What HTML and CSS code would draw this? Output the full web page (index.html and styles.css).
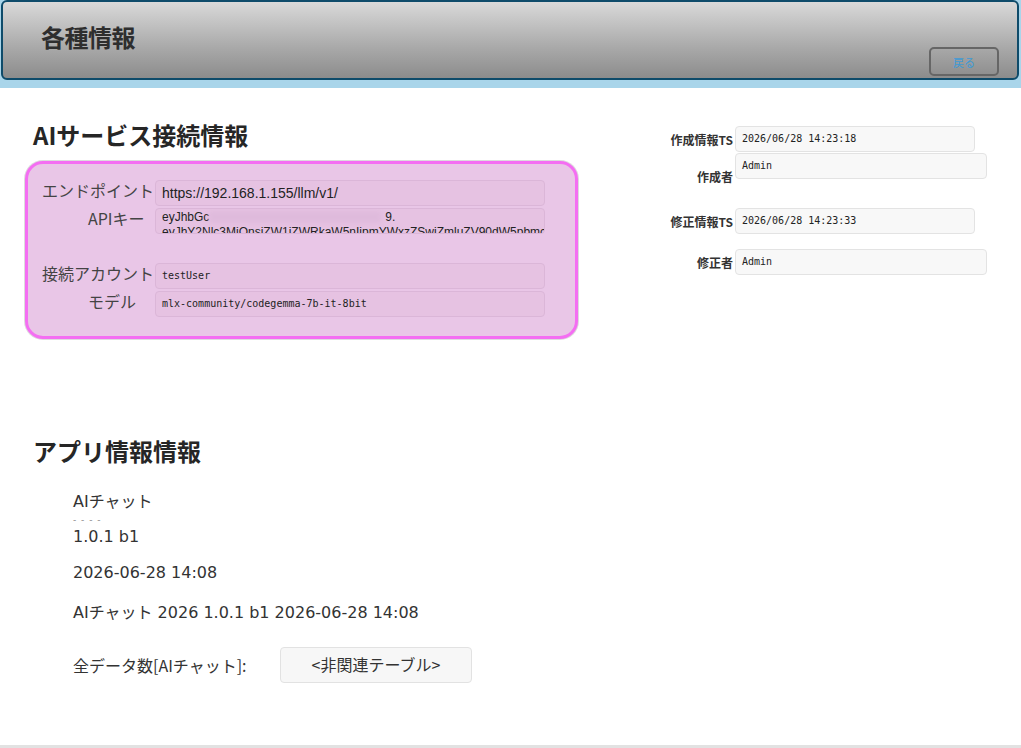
FILE: index.html
```html
<!DOCTYPE html>
<html lang="ja">
<head>
    <meta charset="UTF-8">
    <meta name="viewport" content="width=device-width, initial-scale=1.0">
    <title>各種情報</title>
    <link rel="stylesheet" href="styles.css">
</head>
<body>
    <!-- Header -->
    <header class="topbar">
        <div class="topbar-inner">
            <h1>各種情報</h1>
            <button type="button" class="back-btn">戻る</button>
        </div>
    </header>

    <main class="page">
        <div class="columns">
            <!-- AI service -->
            <section class="left-col">
                <h2 class="section-title">AIサービス接続情報</h2>
                <div class="pink-box">
                    <div class="form-grid">
                        <label class="field-label">エンドポイント</label>
                        <div class="field field-sans">https://192.168.1.155/llm/v1/</div>

                        <label class="field-label indent">APIキー</label>
                        <div class="field field-key">eyJhbGc<span class="blur"></span>9.<br>eyJhY2Nlc3MiOnsiZW1iZWRkaW5nIjpmYWxzZSwiZmluZV90dW5pbmciOmZhbHNl</div>

                        <div class="spacer"></div>

                        <label class="field-label">接続アカウント</label>
                        <div class="field field-mono">testUser</div>

                        <label class="field-label indent">モデル</label>
                        <div class="field field-mono">mlx-community/codegemma-7b-it-8bit</div>
                    </div>
                </div>
            </section>

            <!-- Record info -->
            <aside class="right-col">
                <div class="info-row">
                    <label>作成情報TS</label>
                    <div class="info-field">2026/06/28 14:23:18</div>
                </div>
                <div class="info-row bottom">
                    <label>作成者</label>
                    <div class="info-field wide top">Admin</div>
                </div>
                <div class="info-row gap-lg">
                    <label>修正情報TS</label>
                    <div class="info-field">2026/06/28 14:23:33</div>
                </div>
                <div class="info-row gap-md">
                    <label>修正者</label>
                    <div class="info-field wide">Admin</div>
                </div>
            </aside>
        </div>

        <!-- App info -->
        <section class="app-info">
            <h2 class="section-title">アプリ情報情報</h2>
            <div class="app-body">
                <p class="app-name">AIチャット</p>
                <p class="dashes">- - - -</p>
                <p class="version">1.0.1 b1</p>
                <p class="mt-16">2026-06-28 14:08</p>
                <p class="mt-20">AIチャット 2026 1.0.1 b1 2026-06-28 14:08</p>
                <div class="count-row">
                    <span class="count-label">全データ数[AIチャット]:</span>
                    <div class="count-box">&lt;非関連テーブル&gt;</div>
                </div>
            </div>
        </section>
    </main>

    <footer class="footer-line"></footer>
</body>
</html>
```

FILE: styles.css
```css
/* Reset */
* {
    margin: 0;
    padding: 0;
    box-sizing: border-box;
}

/* Body */
body {
    font-family: 'Noto Sans CJK JP', 'Liberation Sans', sans-serif;
    color: #333;
    background: #fff;
    height: 748px;
    overflow: hidden;
    display: flex;
    flex-direction: column;
}

/* Header */
.topbar {
    background: #a9d5ea;
    padding: 0 2px 8px 1px;
}

.topbar-inner {
    height: 80px;
    border: 2px solid #0e4b6a;
    border-radius: 6px;
    background: linear-gradient(to bottom, #d9d9d9, #a9a9a9 60%, #8c8c8c);
    display: flex;
    justify-content: space-between;
    align-items: flex-start;
    padding: 0 18px 0 38px;
}

.topbar-inner h1 {
    font-size: 24px;
    font-weight: bold;
    color: #2e2e2e;
    line-height: 30px;
    margin-top: 20px;
    letter-spacing: -0.5px;
}

.back-btn {
    margin-top: 45px;
    width: 70px;
    height: 29px;
    border: 2px solid #666;
    border-radius: 5px;
    background: transparent;
    color: #3d9ad6;
    font-family: 'Noto Sans CJK JP', sans-serif;
    font-size: 11px;
    cursor: pointer;
}

/* Page */
.page {
    flex: 1;
}

.columns {
    display: flex;
    padding-top: 32px;
}

.left-col {
    padding-left: 25px;
    width: 578px;
}

.section-title {
    font-size: 24px;
    font-weight: bold;
    line-height: 30px;
    color: #262626;
    padding-left: 8px;
}

/* Pink box */
.pink-box {
    margin-top: 11px;
    width: 553px;
    height: 178px;
    background: #e9c6e7;
    border: 3px solid #f46ef2;
    border-radius: 18px;
    box-shadow: 0 0 0 1px #ddd;
    padding: 16px 0 0 14px;
}

.form-grid {
    display: grid;
    grid-template-columns: 113px 390px;
    row-gap: 2px;
}

.field-label {
    font-size: 16px;
    line-height: 20px;
    color: #444;
    white-space: nowrap;
}

.field-label.indent {
    padding-left: 46px;
}

.spacer {
    grid-column: 1 / 3;
    height: 25px;
}

.field {
    height: 26px;
    background: #e6c2e2;
    border: 1px solid #dbb6d8;
    border-radius: 4px;
    padding: 0 6px;
    overflow: hidden;
    white-space: nowrap;
    color: #222;
}

.field-sans {
    font-family: 'Liberation Sans', sans-serif;
    font-size: 14px;
    line-height: 24px;
}

.field-key {
    font-family: 'Liberation Sans', sans-serif;
    font-size: 12px;
    line-height: 15px;
    padding-top: 1px;
}

.blur {
    display: inline-block;
    width: 172px;
    height: 12px;
    vertical-align: -2px;
    background: #dfbadc;
    filter: blur(2px);
    margin-right: 4px;
}

.field-mono {
    font-family: 'DejaVu Sans Mono', monospace;
    font-size: 10px;
    line-height: 24px;
}

/* Right column */
.right-col {
    margin-left: 75px;
    padding-top: 6px;
}

.info-row {
    display: flex;
    align-items: center;
    margin-bottom: 1px;
}

.info-row.bottom {
    align-items: flex-end;
}

.info-row.bottom label {
    margin-bottom: -6px;
}

.info-row.gap-lg {
    margin-top: 29px;
}

.info-row.gap-md {
    margin-top: 15px;
}

.info-row label {
    width: 80px;
    text-align: right;
    font-size: 12px;
    font-weight: bold;
    color: #333;
    margin-right: 2px;
    white-space: nowrap;
}

.info-field {
    width: 240px;
    height: 26px;
    background: #f8f8f8;
    border: 1px solid #e3e3e3;
    border-radius: 4px;
    padding: 0 6px;
    font-family: 'DejaVu Sans Mono', monospace;
    font-size: 10px;
    line-height: 24px;
    color: #222;
}

.info-field.wide {
    width: 252px;
}

.info-field.top {
    line-height: 12px;
    padding-top: 6px;
}

/* App info */
.app-info {
    padding-left: 25px;
    margin-top: 97px;
}

.app-body {
    padding-left: 48px;
    margin-top: 26px;
    font-family: 'DejaVu Sans', 'Noto Sans CJK JP', sans-serif;
}

.app-body p {
    font-size: 16px;
    line-height: 20px;
    color: #333;
}

.app-body p.dashes {
    font-size: 9px;
    line-height: 8px;
    color: #888;
    margin-top: 4px;
    letter-spacing: 1px;
}

.app-body p.version {
    margin-top: 3px;
}

.mt-16 {
    margin-top: 16px;
}

.mt-20 {
    margin-top: 20px;
}

.count-row {
    display: flex;
    align-items: center;
    margin-top: 24px;
}

.count-label {
    width: 207px;
    font-size: 16px;
    color: #333;
    font-family: 'Noto Sans CJK JP', sans-serif;
}

.count-box {
    width: 192px;
    height: 36px;
    background: #f7f7f7;
    border: 1px solid #e2e2e2;
    border-radius: 4px;
    text-align: center;
    font-family: 'Noto Sans CJK JP', sans-serif;
    font-size: 16px;
    line-height: 32px;
    color: #333;
}

/* Footer */
.footer-line {
    height: 3px;
    background: #e2e2e2;
}
```
